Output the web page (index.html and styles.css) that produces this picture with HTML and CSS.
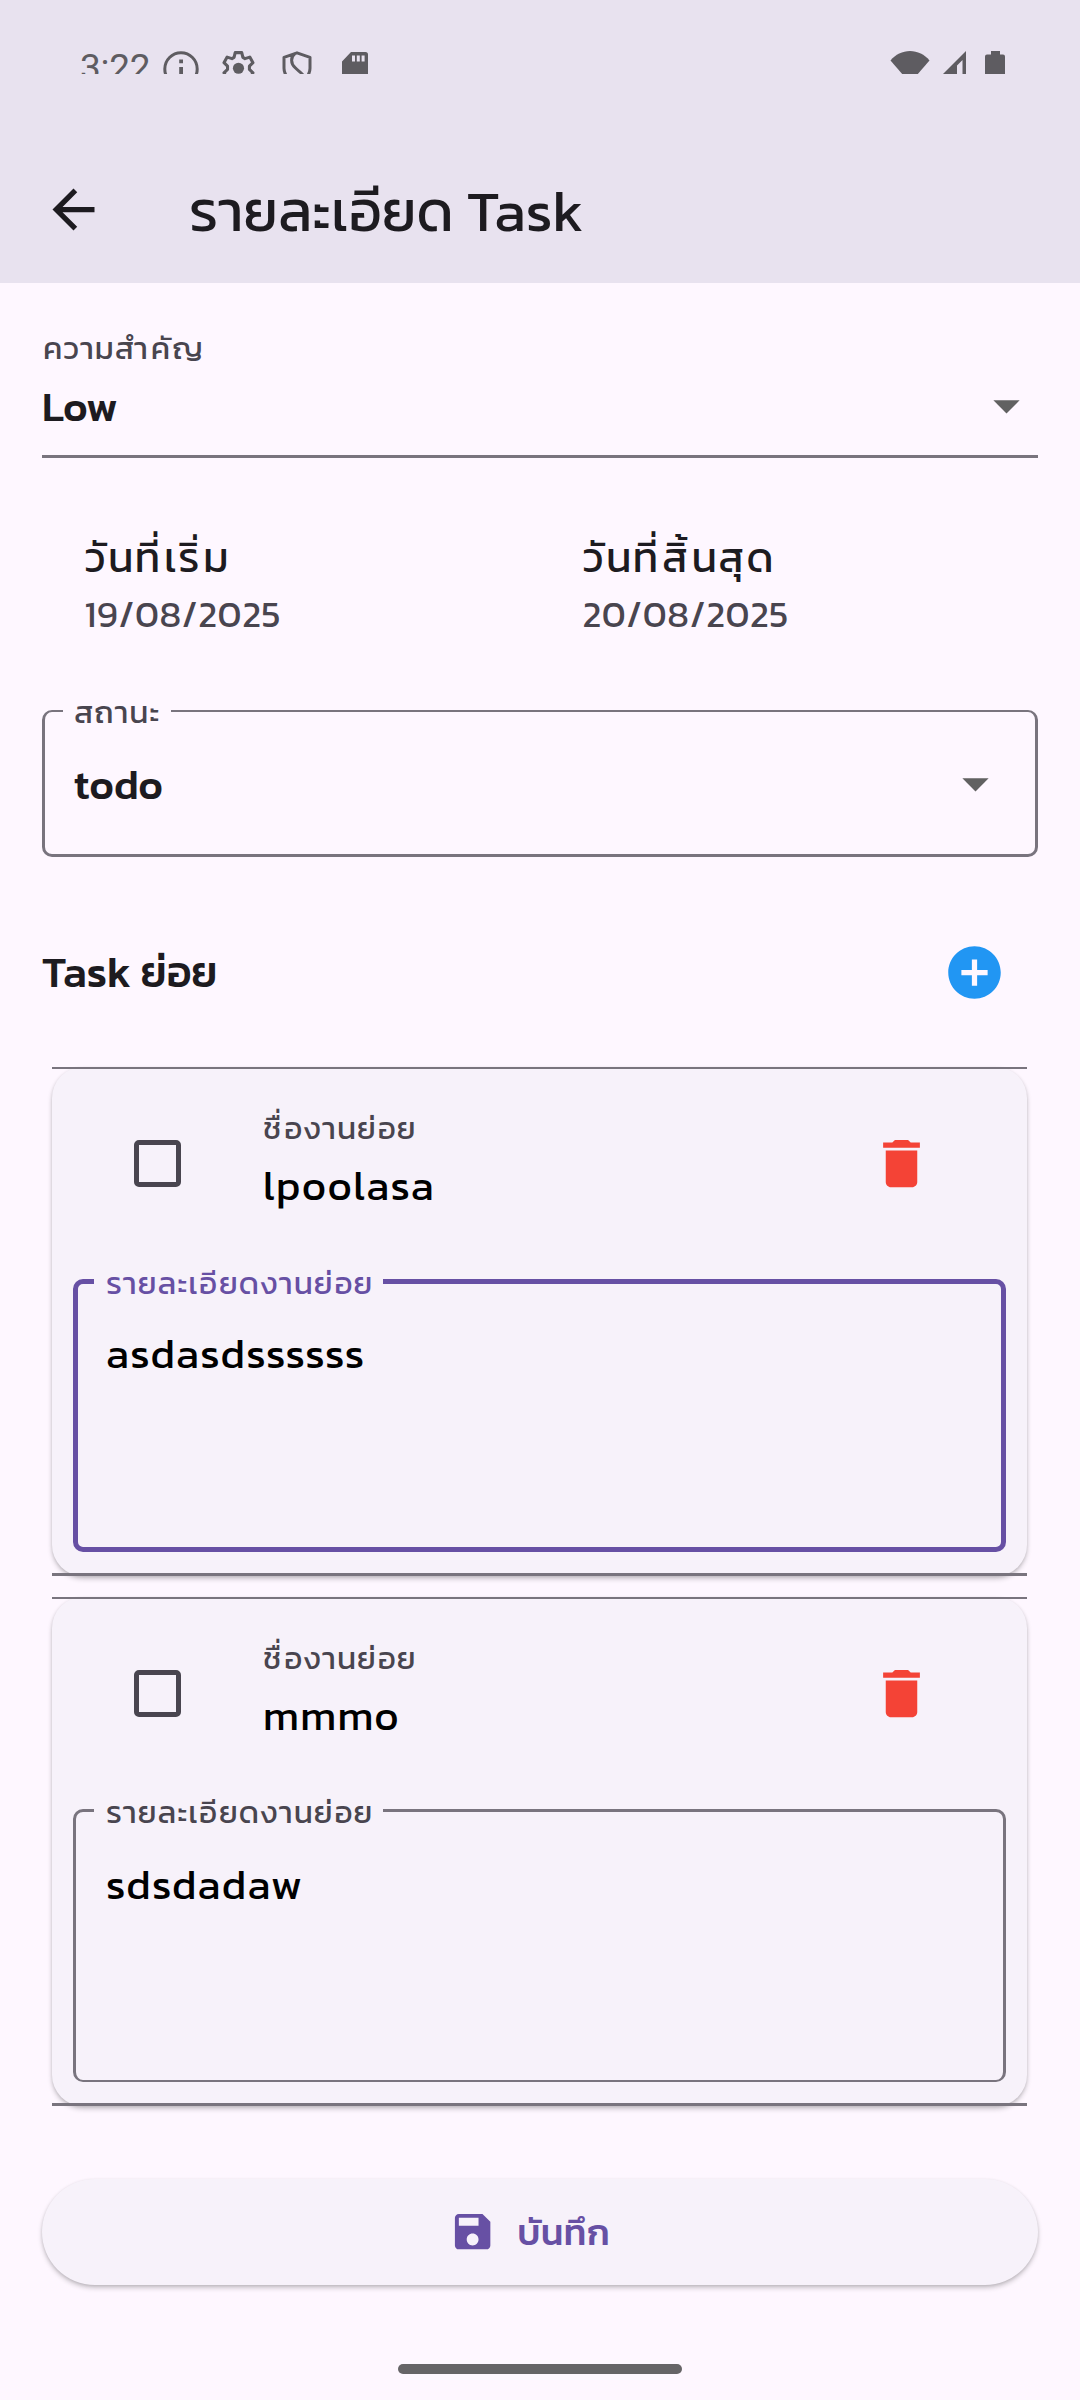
FILE: index.html
```
<!DOCTYPE html>
<html lang="th">
<head>
<meta charset="utf-8">
<title>รายละเอียด Task</title>
<link rel="stylesheet" href="styles.css">
</head>
<body>
<header class="appbar">
  <div class="statusbar">
    <span class="time">3:22</span>
    <div class="status-left">
      <svg class="st-icon" viewBox="0 0 36 36"><circle cx="18" cy="19" r="16.2" fill="none" stroke="currentColor" stroke-width="3"/><path fill="currentColor" d="M16.200 9.500h3.800v3.800h-3.800zM16.200 16.900h3.800V27h-3.800z"/></svg>
      <svg class="st-icon" viewBox="-.2 -1.500 37.500 37.500"><circle cx="18" cy="17.500" r="5.800" fill="currentColor"/><path fill="none" stroke="currentColor" stroke-width="3.200" stroke-linejoin="round" d="M14.600 1.200h6.800l1.200 5 2.200 1.300 5-1.600 3.300 5.800-3.700 3.600v3.400l3.700 3.600-3.300 5.800-5-1.600-2.200 1.300-1.200 5h-6.800l-1.200-5-2.200-1.300-5 1.600-3.300-5.800 3.700-3.600v-3.400l-3.700-3.600 3.300-5.800 5 1.600 2.200-1.300z"/></svg>
      <svg class="st-icon" viewBox="0 0 36 36"><path fill="none" stroke="currentColor" stroke-width="3" stroke-linejoin="round" d="M18 2.800l13 4.500v11C31 25 25.500 31 18 34 10.500 31 5 25 5 18.300v-11zM16 3.500C11.500 7 11.500 13 16 17.500s8 6 9.500 10"/></svg>
      <svg class="st-icon" viewBox="0 0 36 36"><path fill="currentColor" fill-rule="evenodd" d="M14 2h14.500a2.500 2.500 0 0 1 2.500 2.500v30H5V11.500zM15 5.500v6h3v-6zm4.800 0v6h3v-6zm4.800 0v6h3v-6z"/></svg>
    </div>
    <div class="status-right">
      <svg class="st-wifi" viewBox="0 0 40 32"><path fill="currentColor" d="M.5 9.500C5.500 3.500 12.500 0 20 0s14.500 3.500 19.500 9.500L20 32z"/></svg>
      <svg class="st-signal" viewBox="0 0 24 24"><path fill="currentColor" fill-rule="evenodd" d="M24 0v24H0zM20.500 9L15 14.500V24h5.500z"/></svg>
      <svg class="st-battery" viewBox="0 0 20 34"><path fill="currentColor" d="M6 0h9v3.500h3A2 2 0 0 1 20 5.500V34H0V5.500a2 2 0 0 1 2-2h4z"/></svg>
    </div>
  </div>
  <div class="toolbar">
    <svg class="icon" viewBox="0 0 24 24"><path fill="currentColor" d="M20 11H7.830l5.590-5.590L12 4l-8 8 8 8 1.410-1.410L7.830 13H20v-2z"/></svg>
    <h1 class="title">รายละเอียด Task</h1>
  </div>
</header>

<main class="content">
  <div class="select-line">
    <div>
      <div class="label">ความ<span class="m2">สำ</span><span class="m1">คั</span>ญ</div>
      <div class="value strong">Low</div>
    </div>
    <svg class="icon arrow" viewBox="0 0 24 24"><path fill="currentColor" d="M7 10l5 5 5-5z"/></svg>
  </div>

  <div class="dates">
    <div class="date">
      <div class="date-title"><span class="m1">วั</span>น<span class="m2">ที่</span>เ<span class="m2">ริ่</span>ม</div>
      <div class="date-value">19/08/2025</div>
    </div>
    <div class="date">
      <div class="date-title"><span class="m1">วั</span>น<span class="m2">ที่</span><span class="m2">สิ้</span>น<span class="m1">สุ</span>ด</div>
      <div class="date-value">20/08/2025</div>
    </div>
  </div>

  <div class="select-box">
    <span class="label notch notch-status">สถานะ</span>
    <span class="value strong">todo</span>
    <svg class="icon arrow" viewBox="0 0 24 24"><path fill="currentColor" d="M7 10l5 5 5-5z"/></svg>
  </div>

  <div class="section-head">
    <h2 class="value heading">Task ย่อย</h2>
    <svg class="icon add" viewBox="0 0 24 24"><path fill="currentColor" d="M12 2C6.480 2 2 6.480 2 12s4.480 10 10 10 10-4.480 10-10S17.520 2 12 2zm5 11h-4v4h-2v-4H7v-2h4V7h2v4h4v2z"/></svg>
  </div>

  <div class="cards">
    <section class="card">
      <div class="card-row">
        <span class="checkbox"></span>
        <div class="name">
          <div class="label"><span class="m2">ชื่</span>องาน<span class="m1">ย่</span>อย</div>
          <div class="value input">lpoolasa</div>
        </div>
        <svg class="icon trash" viewBox="0 0 24 24"><path fill="currentColor" d="M6 19c0 1.100.900 2 2 2h8c1.100 0 2-.900 2-2V7H6v12zM19 4h-3.500l-1-1h-5l-1 1H5v2h14V4z"/></svg>
      </div>
      <div class="area focused">
        <span class="label notch">รายละเ<span class="m1">อี</span>ยดงาน<span class="m1">ย่</span>อย</span>
        <span class="value input">asdasdssssss</span>
      </div>
    </section>
    <section class="card">
      <div class="card-row">
        <span class="checkbox"></span>
        <div class="name">
          <div class="label"><span class="m2">ชื่</span>องาน<span class="m1">ย่</span>อย</div>
          <div class="value input">mmmo</div>
        </div>
        <svg class="icon trash" viewBox="0 0 24 24"><path fill="currentColor" d="M6 19c0 1.100.900 2 2 2h8c1.100 0 2-.900 2-2V7H6v12zM19 4h-3.500l-1-1h-5l-1 1H5v2h14V4z"/></svg>
      </div>
      <div class="area">
        <span class="label notch">รายละเ<span class="m1">อี</span>ยดงาน<span class="m1">ย่</span>อย</span>
        <span class="value input">sdsdadaw</span>
      </div>
    </section>
  </div>

  <div class="save">
    <svg class="save-icon" viewBox="0 0 24 24"><path fill="currentColor" d="M17 3H5c-1.110 0-2 .900-2 2v14c0 1.100.890 2 2 2h14c1.100 0 2-.900 2-2V7l-4-4zm-5 16c-1.660 0-3-1.340-3-3s1.340-3 3-3 3 1.340 3 3-1.340 3-3 3zm3-10H5V5h10v4z"/></svg>
    <span class="save-text">บันทึก</span>
  </div>
</main>
<div class="home-bar"></div>
</body>
</html>
```
FILE: styles.css
```
* { box-sizing: border-box; }

body {
  margin: 0;
  width: 1080px;
  height: 2400px;
  overflow: hidden;
  display: flex;
  flex-direction: column;
  background: #fef7ff;
  color: #1d1b20;
  font-family: Kanit, "Noto Sans", sans-serif;
  font-weight: 400;
}

svg { display: block; flex: none; }
.icon { width: 63px; height: 63px; }

/* App bar */
.appbar { height: 283px; background: #e8e2ef; flex: none; }
.statusbar {
  height: 74px;
  padding: 50px 75px 0 80px;
  overflow: hidden;
  display: flex;
  align-items: flex-start;
  color: #5e5c61;
}
.time {
  width: 82.5px;
  font: 400 37px/36px Roboto, sans-serif;
  letter-spacing: -.3px;
}
.status-left { display: flex; gap: 22px; }
.st-icon { width: 36px; height: 36px; }
.status-right { display: flex; margin-left: auto; padding-top: 1px; }
.st-wifi { width: 40px; height: 32px; margin-right: 12px; }
.st-signal { width: 24px; height: 24px; margin-right: 19px; }
.st-battery { width: 20px; height: 34px; }
.toolbar {
  height: 147px;
  margin-top: 62px;
  padding-left: 42px;
  display: flex;
  align-items: center;
  gap: 84px;
}
.title { margin: 0; padding-top: 3px; font-size: 57.75px; font-weight: 400; line-height: 72px; }

/* Shared text */
.label {
  font-size: 31.5px;
  line-height: 48px;
  letter-spacing: .031em;
  color: #49454f;
  white-space: nowrap;
}
.value { font-size: 42px; line-height: 48px; white-space: nowrap; }
.strong { font-weight: 500; }
.input { letter-spacing: 1.3px; color: #000; }
.heading { margin: 0; font-size: 43px; font-weight: 500; }
.arrow { color: #616161; }

/* Tracking after syllables that carry one or two marks */
.m1 { letter-spacing: .062em; }
.m2 { letter-spacing: .093em; }

.content { padding: 41px 42px 0; flex: 1; }

.select-line {
  height: 134px;
  display: flex;
  justify-content: space-between;
  border-bottom: 3px solid #79747e;
}
.select-line .label { padding-left: 1px; }
.select-line .value { margin-top: 11px; }
.select-line .arrow { margin-top: 50px; }

.dates {
  margin-top: 68px;
  height: 112px;
  display: grid;
  grid-template-columns: 1fr 1fr;
}
.date { padding-left: 42.5px; }
.date-title { font-size: 42px; line-height: 63px; letter-spacing: .031em; }
.date-value { margin-top: 2px; font-size: 36.75px; line-height: 48px; letter-spacing: .62px; color: #49454f; }

.select-box {
  position: relative;
  height: 147px;
  margin-top: 72px;
  padding: 0 28.5px 0 29px;
  display: flex;
  align-items: center;
  justify-content: space-between;
  border: 3px solid #79747e;
  border-top-width: 2px;
  border-radius: 10px;
}
.select-box .value { padding-top: 3px; }

/* Field label that interrupts the top border */
.notch {
  position: absolute;
  left: 18px;
  top: -24px;
  padding: 0 10px 0 12px;
  background: #fef7ff;
}
.notch-status { padding: 0 10.5px 0 11px; }

.section-head {
  height: 126px;
  margin-top: 52px;
  padding-right: 32px;
  display: flex;
  align-items: center;
  justify-content: space-between;
}
.add { color: #2196f3; }

/* Subtask cards */
.cards {
  margin-top: 32px;
  padding: 0 11px 0 10px;
  display: flex;
  flex-direction: column;
  gap: 21px;
}
.card {
  position: relative;
  height: 509px;
  padding: 0 21px;
  border-radius: 31px;
  background: #f7f2fa;
  box-shadow: 0 3px 5px rgba(0, 0, 0, .2), 0 1px 3px rgba(0, 0, 0, .1);
}
.card::before,
.card::after {
  content: "";
  position: absolute;
  left: 0;
  right: 0;
  background: #79747e;
}
.card::before { top: 0; height: 2px; }
.card::after { bottom: 0; height: 3px; }

.card-row { height: 212px; display: flex; padding: 0 73px 0 61px; }
.checkbox {
  width: 47px;
  height: 47px;
  margin-top: 73px;
  border: 5px solid #49454f;
  border-radius: 5px;
}
.name { margin: 37px auto 0 82px; }
.name .value { margin-top: 10px; }
.trash { margin-top: 65px; color: #f44336; }

.area {
  position: relative;
  height: 273px;
  padding: 49px 30px 0;
  border: 3px solid #79747e;
  border-bottom-width: 2px;
  border-radius: 10px;
}
.area .notch { background: #f7f2fa; }
.area .value { display: block; }
.focused { border: 5px solid #6750a4; padding: 46px 28px 0; }
.focused .notch { left: 16px; top: -25px; color: #6750a4; }

/* Save button */
.save {
  height: 106px;
  margin-top: 73px;
  padding-right: 21px;
  display: flex;
  align-items: center;
  justify-content: center;
  gap: 21px;
  border-radius: 53px;
  background: #f7f2fa;
  color: #6750a4;
  box-shadow: 0 3px 5px rgba(0, 0, 0, .2), 0 1px 3px rgba(0, 0, 0, .1);
}
.save-icon { width: 47.25px; height: 47.25px; }
.save-text { padding-top: 1px; font-size: 36.75px; line-height: 48px; font-weight: 500; letter-spacing: .35px; }

.home-bar {
  flex: none;
  align-self: center;
  width: 284px;
  height: 10px;
  margin-bottom: 26px;
  border-radius: 5px;
  background: #666467;
}
```
